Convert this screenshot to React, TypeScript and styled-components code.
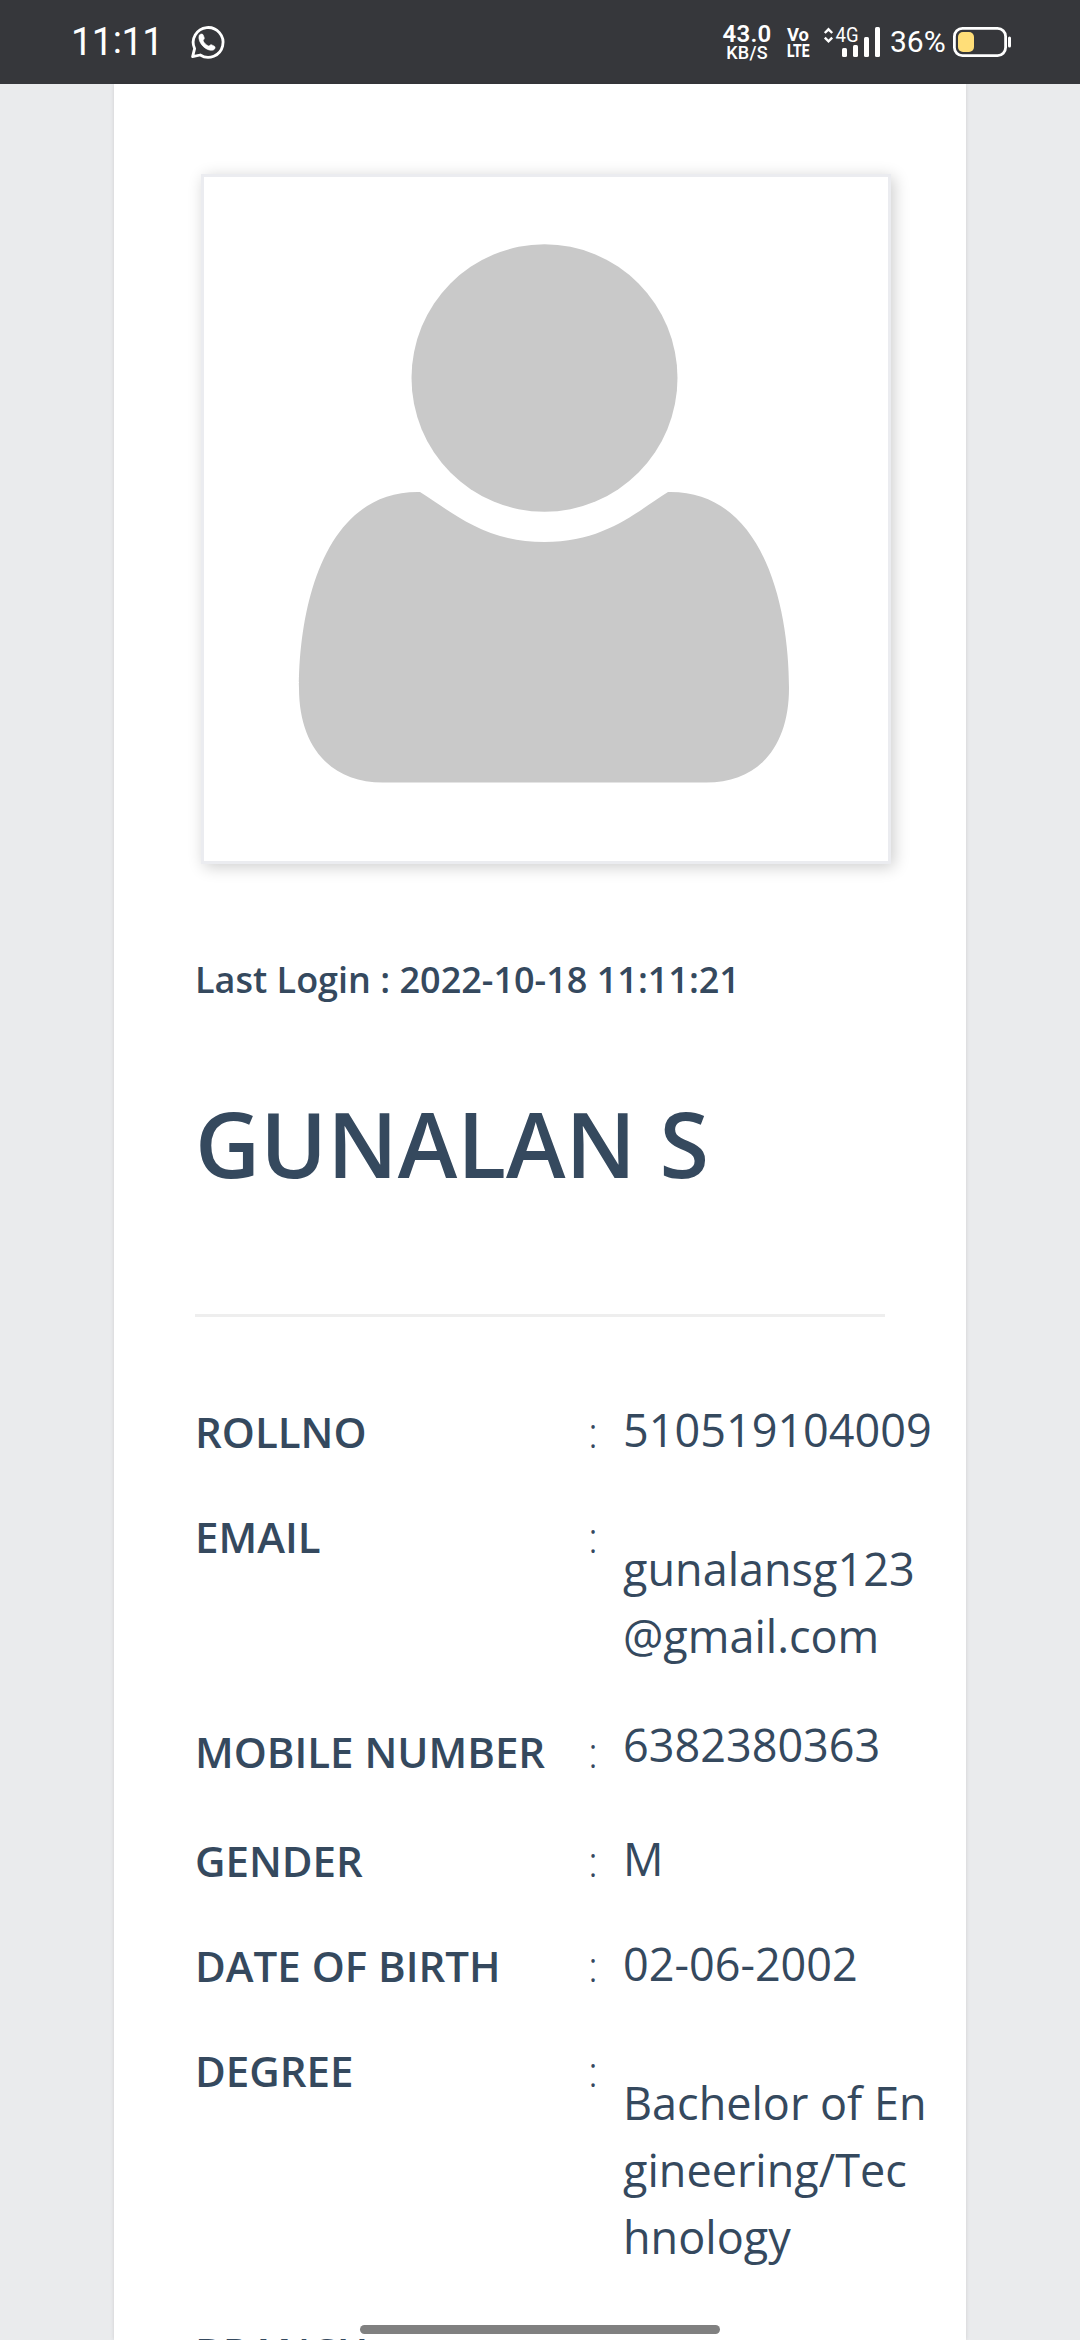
import React from "react";
import styled, { createGlobalStyle } from "styled-components";

const ink = "#35495e";

const GlobalStyle = createGlobalStyle`
  *, *::before, *::after { box-sizing: border-box; }
  html, body { margin: 0; height: 100%; overflow: hidden; }
  body {
    background: #eaebed;
    color: ${ink};
    font-family: "Open Sans", "Noto Sans", sans-serif;
  }
`;

const Screen = styled.div`
  position: relative;
  display: flex;
  flex-direction: column;
  width: 1080px;
  height: 2340px;
  overflow: hidden;
  background: #eaebed;
`;

const StatusBar = styled.header`
  display: flex;
  flex: none;
  align-items: center;
  justify-content: space-between;
  height: 84px;
  padding: 0 68px 0 71px;
  background: #36373b;
  color: #fff;
  font-family: Roboto, "Noto Sans", sans-serif;
`;

const StatusGroup = styled.div`
  display: flex;
  align-items: center;
`;

const Clock = styled.span`
  width: 119px;
  font-size: 38px;
  letter-spacing: -0.5px;
  line-height: 44px;
`;

const ClockColon = styled.span`
  position: relative;
  top: -2px;
`;

const NetSpeed = styled.div`
  display: flex;
  flex-direction: column;
  align-items: center;
  width: 52px;
  margin-right: 13px;
  font-weight: 600;
`;

const SpeedValue = styled.span`
  font-size: 24px;
  letter-spacing: 0.3px;
  line-height: 20px;
`;

const SpeedUnit = styled.span`
  font-size: 18px;
  font-weight: 500;
  letter-spacing: 0.2px;
  line-height: 17px;
`;

const Percent = styled.span`
  width: 63px;
  font-size: 30px;
  line-height: 36px;
`;

const Glyphs = styled.svg`
  display: block;
  flex: none;
  overflow: visible;
`;

const Card = styled.main`
  flex: 1;
  width: 852px;
  min-height: 0;
  margin: 0 auto;
  padding: 90px 81px 0;
  overflow: hidden;
  background: #fff;
  box-shadow: 0 0 4px rgba(0, 0, 0, 0.12);
`;

const Photo = styled.div`
  width: 690px;
  height: 690px;
  margin-left: 6px;
  border: 3px solid #ebecf0;
  background: #fff;
  box-shadow: 3px 3px 15px rgba(0, 0, 0, 0.2);
`;

const LastLogin = styled.p`
  margin: 89px 0 0;
  font-size: 36px;
  font-weight: 600;
  line-height: 54px;
`;

const StudentName = styled.h1`
  margin: 73px 0 0;
  font-size: 90px;
  font-weight: 600;
  line-height: 126px;
`;

const Divider = styled.hr`
  height: 3px;
  margin: 108px 0 75px;
  border: 0;
  background: #eee;
`;

const Details = styled.dl`
  margin: 0;
`;

const DetailRow = styled.div<{ $height: number }>`
  display: grid;
  grid-template-columns: 393px 35px 1fr;
  height: ${(p) => p.$height}px;
`;

const Label = styled.dt`
  padding-top: 10px;
  font-size: 42px;
  font-weight: 600;
  line-height: 60px;
  white-space: nowrap;
`;

const Colon = styled.span`
  padding-top: 10px;
  font-size: 42px;
  font-weight: 300;
  line-height: 60px;
`;

const Value = styled.dd<{ $offset: number }>`
  margin: ${(p) => p.$offset}px 0 0;
  font-size: 45px;
  line-height: 67px;
  white-space: pre;
`;

const HomeIndicator = styled.div`
  position: absolute;
  bottom: 6px;
  left: 360px;
  width: 360px;
  height: 9px;
  border-radius: 5px;
  background: #808080;
`;

const details = [
  { label: "ROLLNO", value: "510519104009", height: 105, offset: 4 },
  { label: "EMAIL", value: "gunalansg123\n@gmail.com", height: 215, offset: 38 },
  { label: "MOBILE NUMBER", value: "6382380363", height: 109, offset: -1 },
  { label: "GENDER", value: "M", height: 105, offset: 4 },
  { label: "DATE OF BIRTH", value: "02-06-2002", height: 105, offset: 4 },
  { label: "DEGREE", value: "Bachelor of En\ngineering/Tec\nhnology", height: 282, offset: 38 },
  { label: "BRANCH", value: "", height: 105, offset: 4 },
];

function WhatsAppIcon() {
  return (
    <Glyphs width="34" height="35" viewBox="0 0 34 35">
      <path
        d="M4.6 23.6A14.9 14.9 0 1 1 10.2 30L2.6 31.6Z"
        fill="none"
        stroke="#fff"
        strokeWidth="2.8"
        strokeLinejoin="round"
      />
      <path
        d="M9.2 10.2C10.6 8.6 12.8 8.6 13.3 10.2L14.3 13C14.6 14.2 12.8 15 13.2 16C14.4 18.3 16 19.8 18.4 20.9C19.6 21.3 20 19.3 21.4 19.7L24.4 21.2C25.8 22 25 24.2 23.3 25C17 27 7 18 9.2 10.2Z"
        fill="#fff"
        stroke="#fff"
        strokeWidth="0.6"
      />
    </Glyphs>
  );
}

function SignalIcons() {
  return (
    <Glyphs width="104" height="36" viewBox="786 24 104 36" fill="#fff">
      <text x="787" y="41" fontSize="18.5" fontWeight="700" textLength="22" lengthAdjust="spacingAndGlyphs">Vo</text>
      <text x="787" y="57" fontSize="19" fontWeight="800" textLength="22.5" lengthAdjust="spacingAndGlyphs">LTE</text>
      <path d="M824.8 33L828.5 29.3L832.2 33M824.8 37.6L828.5 41.3L832.2 37.6" fill="none" stroke="#fff" strokeWidth="2.4" />
      <text x="835.5" y="41.6" fontSize="20" textLength="23" lengthAdjust="spacingAndGlyphs">4G</text>
      <rect x="842" y="48" width="5" height="9" rx="1.5" />
      <rect x="853" y="45" width="5" height="12" rx="1.5" />
      <rect x="864" y="37" width="5" height="20" rx="1.5" />
      <rect x="875" y="27" width="5" height="30" rx="1.5" />
    </Glyphs>
  );
}

function BatteryIcon() {
  return (
    <Glyphs width="59" height="30" viewBox="0 0 59 30">
      <rect x="1.4" y="1.4" width="51.2" height="27.2" rx="8" fill="none" stroke="#fff" strokeWidth="2.8" />
      <rect x="5" y="5" width="16" height="20" rx="5" fill="#ffde78" />
      <rect x="55" y="9.5" width="3" height="11" rx="1.5" fill="#fff" />
    </Glyphs>
  );
}

function Avatar() {
  return (
    <Glyphs width="684" height="684" viewBox="204 177 684 684" fill="#c9c9c9">
      <ellipse cx="544.5" cy="378" rx="133" ry="133.7" />
      <path d="M420 492C452 512 484 542 544.5 542C605 542 636 512 668 492C764 490 789 608 789 688C789 745 760 782.5 706 782.5H383C329 782.5 299 745 299 688C299 608 324 490 420 492Z" />
    </Glyphs>
  );
}

export default function App() {
  return (
    <Screen>
      <GlobalStyle />
      <StatusBar>
        <StatusGroup>
          <Clock>
            11<ClockColon>:</ClockColon>11
          </Clock>
          <WhatsAppIcon />
        </StatusGroup>
        <StatusGroup>
          <NetSpeed>
            <SpeedValue>43.0</SpeedValue>
            <SpeedUnit>KB/S</SpeedUnit>
          </NetSpeed>
          <SignalIcons />
          <Percent>36%</Percent>
          <BatteryIcon />
        </StatusGroup>
      </StatusBar>
      <Card>
        <Photo>
          <Avatar />
        </Photo>
        <LastLogin>Last Login : 2022-10-18 11:11:21</LastLogin>
        <StudentName>GUNALAN S</StudentName>
        <Divider />
        <Details>
          {details.map((d) => (
            <DetailRow key={d.label} $height={d.height}>
              <Label>{d.label}</Label>
              {d.value && <Colon>:</Colon>}
              {d.value && <Value $offset={d.offset}>{d.value}</Value>}
            </DetailRow>
          ))}
        </Details>
      </Card>
      <HomeIndicator />
    </Screen>
  );
}
